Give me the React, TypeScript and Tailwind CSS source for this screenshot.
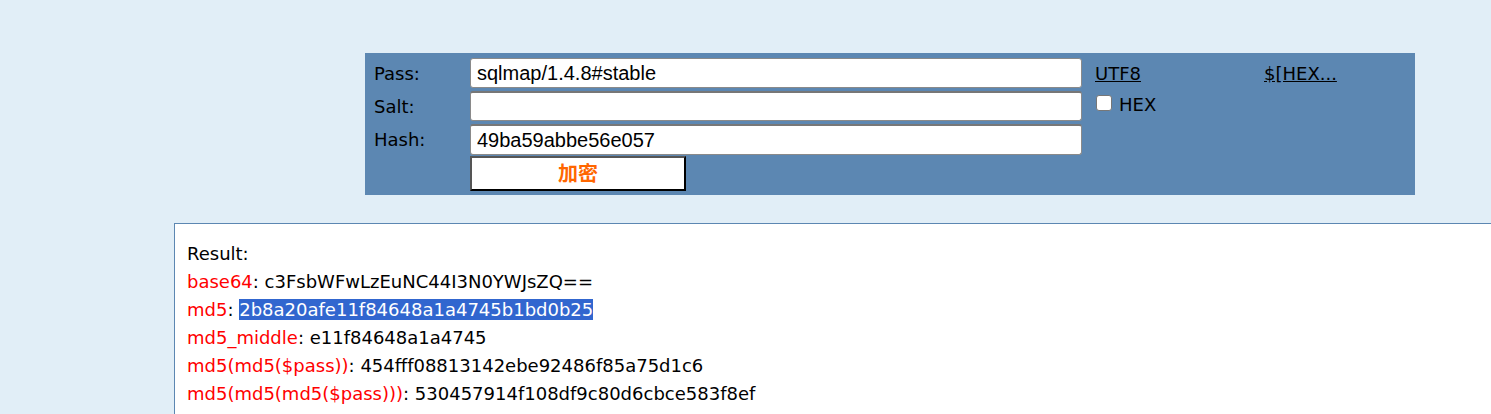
export default function App() {
  const rows: [string, string][] = [
    ['base64', 'c3FsbWFwLzEuNC44I3N0YWJsZQ=='],
    ['md5', '2b8a20afe11f84648a1a4745b1bd0b25'],
    ['md5_middle', 'e11f84648a1a4745'],
    ['md5(md5($pass))', '454fff08813142ebe92486f85a75d1c6'],
    ['md5(md5(md5($pass)))', '530457914f108df9c80d6cbce583f8ef'],
  ]

  return (
    <div className="h-[414px] w-[1491px] overflow-hidden bg-[#e1eef7] font-['DejaVu_Sans',sans-serif] text-[18px] text-black">
      {/* Form panel */}
      <div className="ml-[365px] mt-[53px] w-[1050px] bg-[#5c87b2] pl-[9px] pt-[5px] pb-[4px]">
        <div className="grid grid-cols-[96px_612px_182px_auto] gap-y-[3px]">
          <div className="flex items-center">Pass:</div>
          <input
            readOnly
            value="sqlmap/1.4.8#stable"
            className="h-[30px] rounded-[3px] border border-[#8a8a8a] bg-white px-[6px] font-['Liberation_Sans',sans-serif] text-[20px] outline-none"
          />
          <div className="flex items-center pl-[13px]">
            <a href="#" className="underline">UTF8</a>
          </div>
          <div className="flex items-center">
            <a href="#" className="underline">$[HEX...</a>
          </div>

          <div className="flex items-center">Salt:</div>
          <input
            readOnly
            value=""
            className="h-[30px] rounded-[3px] border border-[#8a8a8a] border-t-2 border-t-[#777] bg-white px-[6px] font-['Liberation_Sans',sans-serif] text-[20px] outline-none"
          />
          <div className="flex items-start gap-[7px] pl-[14px] pt-[3px]">
            <span className="mt-[1px] h-[16px] w-[16px] rounded-[3px] border border-[#777] bg-white" />
            <span className="leading-[22px]">HEX</span>
          </div>
          <div />

          <div className="flex items-center">Hash:</div>
          <input
            readOnly
            value="49ba59abbe56e057"
            className="h-[31px] rounded-[3px] border border-[#8a8a8a] border-t-2 border-t-[#777] bg-white px-[6px] font-['Liberation_Sans',sans-serif] text-[20px] outline-none"
          />
          <div />
          <div />
        </div>
        <div className="ml-[96px] mt-[1px]">
          <button className="h-[35px] w-[216px] border-2 border-t-[#555] border-l-[#555] border-r-black border-b-black bg-white pb-[2px] font-['Noto_Sans_CJK_SC',sans-serif] text-[20px] font-bold text-[#ff6600]">
            加密
          </button>
        </div>
      </div>

      {/* Result box */}
      <div className="ml-[174px] mt-[28px] w-[1340px] border border-[#5c87b2] bg-white pl-[12px] pt-[16px] pb-[20px] leading-[28px]">
        <div>Result:</div>
        {rows.map(([k, v]) => (
          <div key={k}>
            <span className="text-[#ff0000]">{k}</span>
            <span>: </span>
            {k === 'md5' ? (
              <span className="bg-[#3166cf] text-white">{v}</span>
            ) : (
              <span>{v}</span>
            )}
          </div>
        ))}
      </div>
    </div>
  )
}
